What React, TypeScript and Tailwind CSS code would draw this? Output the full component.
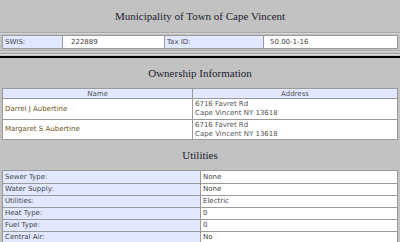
import React from "react";

const owners = [
  { name: "Darrel J Aubertine", line1: "6716 Favret Rd", line2: "Cape Vincent NY 13618" },
  { name: "Margaret S Aubertine", line1: "6716 Favret Rd", line2: "Cape Vincent NY 13618" },
];

const utilities = [
  ["Sewer Type:", "None"],
  ["Water Supply:", "None"],
  ["Utilities:", "Electric"],
  ["Heat Type:", "0"],
  ["Fuel Type:", "0"],
  ["Central Air:", "No"],
];

function SectionTitle({ children }: { children: React.ReactNode }) {
  return (
    <div className="h-[30px] flex items-center justify-center font-['Liberation_Serif',serif] text-[11px] text-[#1c1c30]">
      {children}
    </div>
  );
}

export default function App() {
  return (
    <div className="w-[400px] h-[242px] overflow-hidden bg-[#c2c2c2] font-['DejaVu_Sans',Verdana,sans-serif] text-[7px] text-[#444]">
      <div className="h-[32px] flex items-center justify-center font-['Liberation_Serif',serif] text-[11px] text-[#1c1c30]">
        Municipality of Town of Cape Vincent
      </div>
      <div className="h-[2px] border-t border-[#a9a9a9] bg-[#d6d6d6]" />
      <div className="px-[2px] pt-[1px]">
        <div className="grid grid-cols-[60px_101px_100px_1fr] h-[14px] border border-[#9a9a9a] bg-white">
          <div className="bg-[#e1e8ff] border-r border-[#9a9a9a] px-[2px] flex items-center">SWIS:</div>
          <div className="px-[8px] flex items-center">222889</div>
          <div className="bg-[#e1e8ff] border-x border-[#9a9a9a] px-[2px] flex items-center">Tax ID:</div>
          <div className="px-[6px] flex items-center">50.00-1-16</div>
        </div>
      </div>
      <div className="h-[2px] mt-[1px] border-t border-[#a9a9a9] bg-[#d6d6d6]" />
      <div className="h-[2px] mt-[1px] border-t border-[#a9a9a9] bg-[#d6d6d6]" />
      <div className="h-[2px] mt-[1px] bg-black" />

      <SectionTitle>Ownership Information</SectionTitle>
      <div className="px-[2px]">
        <div className="border border-[#9a9a9a] bg-white">
          <div className="grid grid-cols-[190px_1fr] h-[10px] bg-[#e1e8ff] text-[#555] border-b border-[#9a9a9a]">
            <div className="flex items-center justify-center border-r border-[#9a9a9a]">Name</div>
            <div className="flex items-center justify-center">Address</div>
          </div>
          {owners.map((o, i) => (
            <div
              key={o.name}
              className={`grid grid-cols-[190px_1fr] h-[20px] ${i > 0 ? "border-t border-[#9a9a9a]" : ""}`}
            >
              <div className="flex items-center px-[2px] border-r border-[#9a9a9a] text-[#6b5518]">{o.name}</div>
              <div className="flex flex-col justify-center px-[2px] leading-[9px] text-[#555]">
                <span>{o.line1}</span>
                <span>{o.line2}</span>
              </div>
            </div>
          ))}
        </div>
      </div>

      <SectionTitle>Utilities</SectionTitle>
      <div className="px-[2px]">
        <div className="border border-[#9a9a9a] bg-white">
          {utilities.map(([label, value], i) => (
            <div
              key={label}
              className={`grid grid-cols-[198px_1fr] h-[12px] ${i > 0 ? "border-t border-[#9a9a9a]" : ""}`}
            >
              <div className="flex items-center px-[2px] bg-[#e1e8ff] border-r border-[#9a9a9a]">{label}</div>
              <div className="flex items-center px-[2px]">{value}</div>
            </div>
          ))}
        </div>
      </div>
    </div>
  );
}
